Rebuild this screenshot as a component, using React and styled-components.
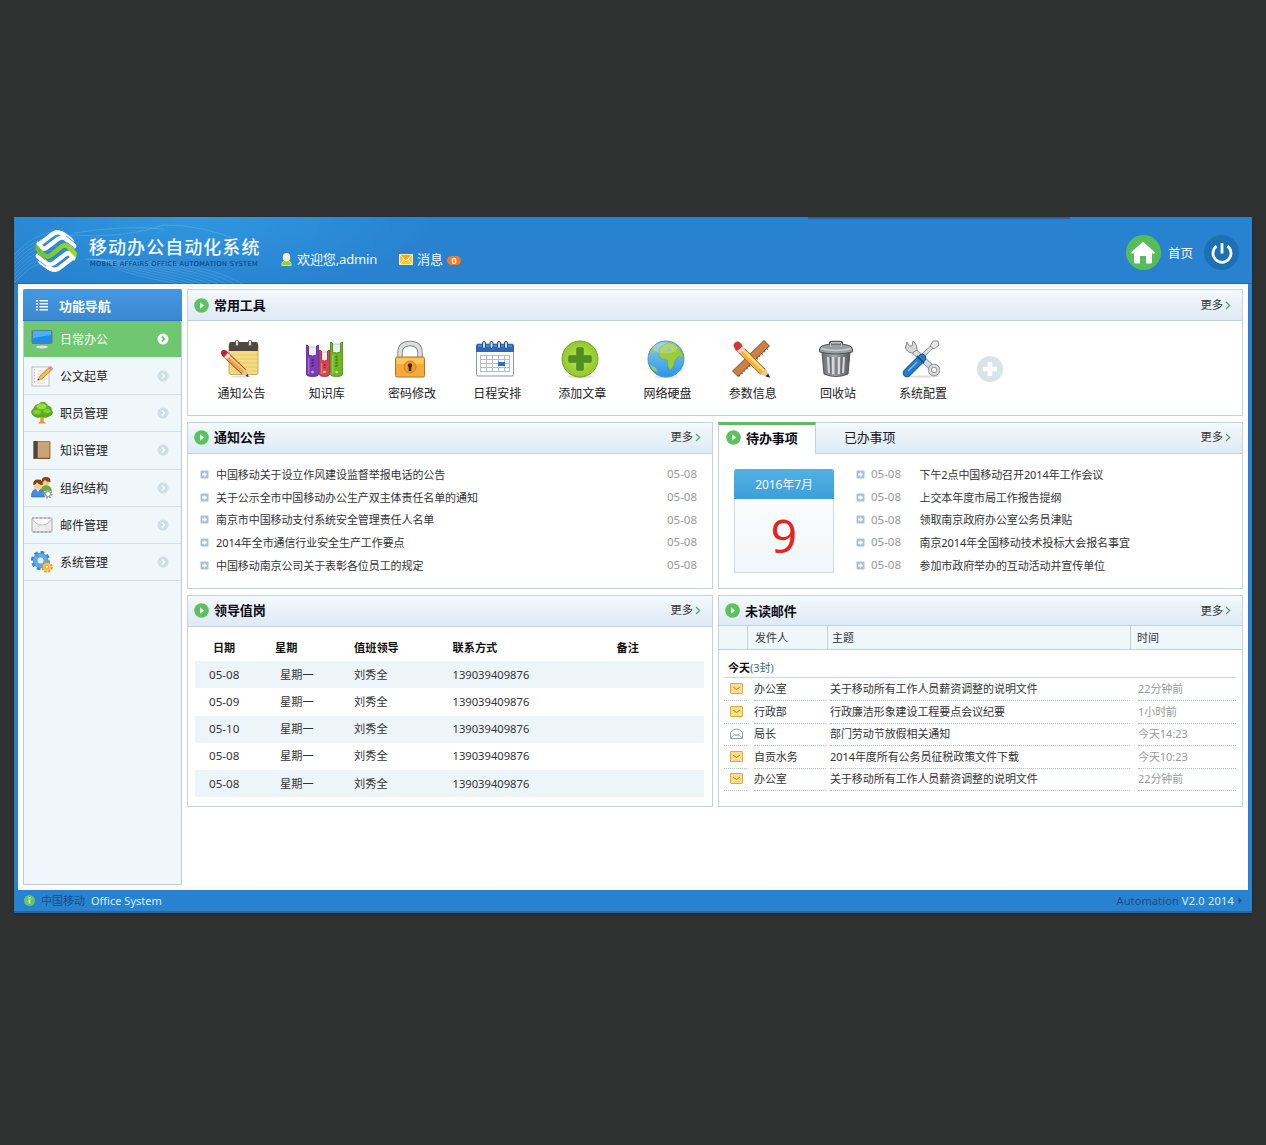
import React from "react";
import styled, { createGlobalStyle } from "styled-components";

const Global = createGlobalStyle`
  * { box-sizing: border-box; }
  body {
    margin: 0;
    background: #303231;
    color: #333;
    font-family: "Noto Sans", "Noto Sans CJK SC", sans-serif;
    font-size: 11px;
    line-height: 20px;
    white-space: nowrap;
  }
  svg { display: block; flex: none; }
`;

const Page = styled.div`
  min-height: 1145px;
  padding: 217px 14px 0;
`;

const Frame = styled.div`
  width: 1238px;
  height: 696px;
  display: flex;
  flex-direction: column;
  background: #2882d0;
  border-bottom: 2px solid #1f68a8;
  box-shadow: 0 1px 3px rgba(0, 0, 0, 0.35);
`;

const Header = styled.header`
  height: 67px;
  display: flex;
  position: relative;
  border-bottom: 1px solid #1e6cb2;
  background: radial-gradient(ellipse 240px 75px at 180px 0, #3097df, rgba(40, 130, 208, 0)), #2882d0;
`;

const HeaderWaves = styled.svg`
  position: absolute;
  left: 0;
  top: 0;
`;

const HeaderShade = styled.div`
  position: absolute;
  left: 794px;
  top: 0;
  width: 262px;
  height: 3px;
  background: linear-gradient(#25588a, rgba(40, 130, 208, 0));
`;

const Brand = styled.div`
  display: flex;
  position: relative;
  padding: 13px 0 0 21px;
  width: 267px;
`;

const BrandText = styled.div`
  padding: 7px 0 0 12px;
`;

const BrandName = styled.div`
  color: #f2faff;
  font-size: 18px;
  font-weight: 500;
  letter-spacing: 1.05px;
  line-height: 20px;
`;

const BrandSub = styled.div`
  margin-top: 3px;
  color: #0d3c6c;
  font-family: "DejaVu Sans", sans-serif;
  font-size: 6.6px;
  line-height: 9px;
  letter-spacing: 0.35px;
  padding-left: 1px;
`;

const HeaderItem = styled.div`
  display: flex;
  position: relative;
  align-items: center;
  height: 20px;
  margin-top: 32px;
  color: #f3faff;
  font-size: 13px;
  gap: ${(p) => p.$gap}px;
  width: ${(p) => p.$w}px;
`;

const Tight = styled.span`
  letter-spacing: ${(p) => p.$ls}px;
`;

const Badge = styled.span`
  width: 14px;
  height: 9px;
  border-radius: 5px;
  background: #ee7a2b;
  color: #fff;
  font-size: 9px;
  font-weight: 600;
  line-height: 9px;
  text-align: center;
  margin-top: 3px;
`;

const HeaderRight = styled.div`
  display: flex;
  margin-left: auto;
  padding: 18px 13px 0 0;
  align-items: flex-start;
`;

const Round = styled.div`
  width: 35px;
  height: 35px;
  border-radius: 50%;
  display: flex;
  align-items: center;
  justify-content: center;
  background: ${(p) => p.$bg};
`;

const HomeLabel = styled.span`
  color: #f3faff;
  font-size: 12.5px;
  padding: 9px 11px 0 7px;
`;

const Body = styled.div`
  height: 606px;
  margin: 0 4px;
  padding: 5px;
  display: flex;
  gap: 5px;
  background: linear-gradient(#f1f4f5, #fff 6px, #fff 601px, #f8f4f0);
`;

const Sidebar = styled.nav`
  width: 159px;
  height: 596px;
  background: #f0f7fb;
  border: 1px solid #b7ced6;
  border-top: 0;
  border-radius: 2px 2px 0 0;
`;

const SideHead = styled.div`
  margin: 0 -1px;
  height: 32px;
  padding-left: 13px;
  display: flex;
  align-items: center;
  gap: 11px;
  border-radius: 2px 2px 0 0;
  background: linear-gradient(#4598df, #3a88d2);
  border-bottom: 1px solid #2f78bd;
  color: #fff;
  font-size: 13px;
  font-weight: 700;
  letter-spacing: -0.1px;
  & > * { margin-top: 2px; }
`;

const SideItem = styled.div`
  height: ${(p) => (p.$active ? 37 : 37.2)}px;
  padding: 0 12px 0 7px;
  display: flex;
  align-items: center;
  color: ${(p) => (p.$active ? "#fff" : "#222")};
  background: ${(p) => (p.$active ? "#6fc871" : "transparent")};
  border-bottom: 1px solid ${(p) => (p.$active ? "#e6f3ee" : "#d3e0e6")};
  font-size: 12px;
  & > span { margin-left: 7px; margin-right: auto; padding-top: 2px; }
`;

const Main = styled.main`
  flex: 1;
  display: flex;
  flex-direction: column;
  gap: 6px;
`;

const Row = styled.div`
  display: grid;
  grid-template-columns: 526px 525px;
  gap: 5px;
`;

const Panel = styled.section`
  height: ${(p) => p.$h}px;
  border: 1px solid #c5d4db;
  background: #fff;
`;

const PanelHead = styled.div`
  height: ${(p) => (p.$low ? 30 : 31)}px;
  display: flex;
  align-items: center;
  padding: 0 11px ${(p) => (p.$raise ? 2 : 0)}px ${(p) => (p.$tabbed ? 0 : 6)}px;
  background: linear-gradient(#f4f9fc, #deeaf5);
  border-bottom: 1px solid #c0d3dc;
`;

const Title = styled.h2`
  margin: 0 auto 0 5px;
  color: #0c0c14;
  font-size: 13px;
  font-weight: 700;
  line-height: 20px;
  letter-spacing: -0.1px;
`;

const More = styled.a`
  display: flex;
  align-items: center;
  gap: 2px;
  margin-left: auto;
  color: #333;
  font-size: 11.3px;
`;

const ActiveTab = styled.div`
  width: 98px;
  height: 32px;
  margin: -1px 0 0 -1px;
  padding: 0 0 4px 7px;
  display: flex;
  align-items: center;
  align-self: flex-start;
  border-top: 3px solid #63b866;
  border-right: 1px solid #c0d3dc;
  border-left: 1px solid #c5d4db;
  background: #fff;
`;

const Tab = styled.div`
  margin-left: 28px;
  color: #16161c;
  font-size: 13px;
  letter-spacing: -0.2px;
`;

const Tools = styled.div`
  display: flex;
  padding: 19px 0 0 11px;
`;

const Tool = styled.div`
  width: 85.2px;
  display: flex;
  flex-direction: column;
  align-items: center;
  color: #222;
  font-size: 12px;
  line-height: 20px;
  & > svg { margin-right: 4px; }
  & > span { margin-top: 6px; }
`;

const AddTool = styled.div`
  width: 26px;
  height: 26px;
  margin: 16px 0 0 11px;
`;

const List = styled.div`
  flex: 1;
  padding: ${(p) => p.$pad};
`;

const ListRow = styled.div`
  height: 22.7px;
  display: flex;
  align-items: center;
  color: #333;
`;

const ListText = styled.span`
  margin-left: ${(p) => p.$left}px;
  margin-right: auto;
  padding-top: 1px;
  letter-spacing: -0.09px;
`;

const DateText = styled.span`
  color: #999;
  font-size: 11.5px;
  margin-left: ${(p) => p.$left || 0}px;
`;

const Agenda = styled.div`
  display: flex;
`;

const Calendar = styled.div`
  width: 100px;
  height: 104px;
  margin: 15px 0 0 15px;
  border: 1px solid #cddbe4;
  border-radius: 3px 3px 0 0;
  background: linear-gradient(#fff, #f0f6fa);
  text-align: center;
`;

const CalendarMonth = styled.div`
  height: 30px;
  margin: -1px -1px 0;
  border-radius: 3px 3px 0 0;
  background: linear-gradient(#52b0e6, #3d9fda);
  color: #f3faff;
  font-size: 12px;
  line-height: 31px;
  letter-spacing: -0.1px;
`;

const CalendarDay = styled.div`
  color: #e8231c;
  font-size: 46px;
  line-height: 73px;
`;

const Roster = styled.div`
  padding: 7px 8px 0 7px;
`;

const RosterRow = styled.div`
  height: 27.2px;
  display: grid;
  grid-template-columns: 80px 79px 98.5px 164px 1fr;
  align-items: center;
  background: ${(p) => (p.$shade ? "#edf5f9" : "transparent")};
  color: ${(p) => (p.$head ? "#111" : "#333")};
  font-weight: ${(p) => (p.$head ? 700 : 400)};
  font-size: 11.2px;
  & > :first-child { padding-left: ${(p) => (p.$head ? 18 : 14)}px; font-size: ${(p) => (p.$head ? 11.1 : 11.6)}px; }
  & > :nth-child(2) { padding-left: ${(p) => (p.$head ? 0 : 5)}px; }
`;

const MailHead = styled.div`
  height: 24px;
  display: grid;
  grid-template-columns: 28px 80px 303px 1fr;
  line-height: 24px;
  background: #f0f7fb;
  border-bottom: 1px solid #c0d3dc;
  & > span { border-left: 1px solid #c0d3dc; padding-left: 7px; }
  & > span:first-child { border-left: 0; }
  & > span:nth-child(3) { padding-left: 4px; }
  & > span:nth-child(4) { padding-left: 6px; }
`;

const MailGroup = styled.div`
  height: 28px;
  margin: 0 6px 0 5px;
  padding: 8px 0 0 4px;
  border-bottom: 1px solid #cad4da;
  color: #3f6d8e;
  & > b { color: #111; }
`;

const MailRow = styled.div`
  height: 22.6px;
  margin: 0 6px 0 5px;
  display: grid;
  grid-template-columns: 23px 73px 300px 1fr;
  & > * {
    border-bottom: 1px dotted #b4c0c8;
    line-height: 22px;
    letter-spacing: -0.07px;
  }
  & > :nth-child(1) { padding: 5px 0 0 6px; }
  & > :nth-child(2) { margin-left: 7px; margin-right: -6px; }
  & > :nth-child(3) { margin-left: 10px; margin-right: -10px; }
  & > :nth-child(4) { margin-left: 18px; color: #999; }
`;

const Footer = styled.footer`
  flex: 1;
  display: flex;
  align-items: center;
  padding: 0 9px 0 10px;
  color: #1c568c;
  font-size: 11px;
`;

const FooterText = styled.span`
  color: ${(p) => (p.$light ? "#d5f0ff" : "#174f85")};
  margin-left: ${(p) => (p.$push ? "auto" : `${p.$left}px`)};
  letter-spacing: ${(p) => p.$ls || 0}px;
`;

const upperBands = [
  "M4 15L7.500 18.300Q9 19.500 11 18L23 9Q27 6 31 9L41 17.500",
  "M1 13.500L3.500 14Q5 14 7 12.300L17 4.500Q22 .5 27 3.500L39 12",
];

const Logo = () => (
  <svg width="42" height="42" viewBox="0 0 42 42" fill="none">
    <defs>
      <clipPath id="disc"><circle cx="21" cy="21" r="21" /></clipPath>
      <linearGradient id="leaf"><stop offset="0" stopColor="#6cbd20" /><stop offset="1" stopColor="#a5dc22" /></linearGradient>
    </defs>
    <g clipPath="url(#disc)">
      {[0, 180].map((turn) => (
        <g key={turn} transform={`rotate(${turn} 21 21)`}>
          {upperBands.map((d) => <path key={d} d={d} stroke="#fff" strokeWidth="4.600" />)}
          <path d="M31 6L43 15M32 12.500L43 21" stroke="#2b88d4" strokeWidth=".8" />
        </g>
      ))}
      <path d="M-1 15L8 24.500Q11.500 28 15.500 25.500L26.500 16.500Q30.500 14 34 17.500L43 27" stroke="url(#leaf)" strokeWidth="4.600" />
    </g>
  </svg>
);

const Waves = () => (
  <HeaderWaves width="280" height="67" fill="none">
    {Array.from({ length: 8 }, (_, i) => (
      <path key={`a${i}`} d={`M0 ${38 + i * 4}C${10 + i} ${28 + i * 3} 22 ${16 + i * 4} ${46 - i} ${14 + i * 5}`} stroke="#8ad0f8" strokeWidth=".6" opacity=".4" />
    ))}
    {Array.from({ length: 9 }, (_, i) => (
      <path key={`b${i}`} d={`M${70 + i * 3} 42C${110 - i * 2} ${44 + i} ${190 - i * 9} ${42 + i * 2} ${228 - i * 8} 67`} stroke="#8ad0f8" strokeWidth=".6" opacity=".4" />
    ))}
    <path d="M55 18Q110 22 150 8Q190 8 225 24M60 16Q110 8 150 12" stroke="#8ad0f8" strokeWidth=".7" opacity=".4" />
  </HeaderWaves>
);

const Play = () => (
  <svg width="15" height="15" viewBox="0 0 15 15">
    <circle cx="7.5" cy="7.5" r="7.3" fill="#5cc25f" /><path d="M6 4.300L10 7.500L6 10.700Z" fill="#fff" />
  </svg>
);

const Chevron = () => (
  <svg width="6" height="9" viewBox="0 0 6 9" fill="none"><path d="M1 1l3.600 3.500L1 8" stroke="#4cab58" strokeWidth="1.3" /></svg>
);

const Bullet = () => (
  <svg width="9" height="9" viewBox="0 0 9 9">
    <rect x=".5" y=".5" width="8" height="8" rx="1" fill="#a8c3d9" />
    <path d="M2 3.500h2.200V2L7 4.500L4.200 7V5.500H2Z" fill="#fff" />
  </svg>
);

const Arrow = ({ active }) => (
  <svg width="12" height="12" viewBox="0 0 12 12" fill="none">
    <circle cx="6" cy="6" r="5.500" fill={active ? "#fff" : "#d0dfe7"} />
    <path d="M4.800 3.400L7.300 6L4.800 8.600" stroke={active ? "#59b45d" : "#fff"} strokeWidth="1.500" />
  </svg>
);

const Envelope = ({ open }) => open ? (
  <svg width="13" height="11" viewBox="0 0 13 11" fill="none" stroke="#98a0a8">
    <path d="M.5 4.500Q6.500-2.500 12.500 4.500V10.500H.5Z" fill="#fafafa" /><path d="M1 10L4 7H9L12 10M3 5.500Q6.500 9 10 5.500" strokeWidth=".8" />
  </svg>
) : (
  <svg width="13" height="11" viewBox="0 0 13 11" fill="none">
    <rect x=".5" y=".5" width="12" height="10" rx=".5" fill="#fbdf88" stroke="#e0a93a" />
    <path d="M3 4L6.500 6.500L10 4" stroke="#c07d20" /><path d="M1.500 9.500L4 7M11.500 9.500L9 7" stroke="#fff8d8" />
  </svg>
);

const HeaderMail = () => (
  <svg width="14" height="11" viewBox="0 0 14 11">
    <rect x=".5" y=".5" width="13" height="10" fill="#f8c53a" stroke="#fbe9a0" /><path d="M1 1L7 7L13 1M1 10L5 5M13 10L9 5" fill="none" stroke="#fff4cf" />
    <path d="M2 1L7 5.500L12 1" fill="#f0aa22" />
  </svg>
);

const UserIcon = () => (
  <svg width="11" height="13" viewBox="0 0 11 13">
    <path d="M.8 12.500Q.5 7.500 5.500 7.500T10.200 12.500Z" fill="#8bd620" stroke="#e8f7c8" strokeWidth=".7" />
    <ellipse cx="5.500" cy="4.200" rx="3.400" ry="3.900" fill="#fdf0c4" stroke="#fff" strokeWidth=".6" />
  </svg>
);

const HomeIcon = () => (
  <svg width="24" height="22" viewBox="0 0 24 22"><path d="M12 0Q12.500 0 13 .5L23.500 10Q24 11.500 22.500 11.500H21V20.500Q21 21.500 20 21.500H15V14H9V21.500H4Q3 21.500 3 20.500V11.500H1.500Q0 11.500 .5 10L11 .5Q11.500 0 12 0Z" fill="#fff" /></svg>
);

const PowerIcon = () => (
  <svg width="22" height="22" viewBox="0 0 22 22" fill="none" stroke="#fff" strokeWidth="2.800"><path d="M11 1V11.500" /><path d="M5.500 4.200A9 9 0 1 0 16.500 4.200" /></svg>
);

const ListIcon = () => (
  <svg width="12" height="11" viewBox="0 0 12 11" fill="#fff">
    {[0, 3, 6, 9].map((y) => <g key={y}><rect y={y} width="2" height="1.500" /><rect x="3.500" y={y} width="8.500" height="1.500" /></g>)}
  </svg>
);

const sideIcons = {
  monitor: <>
    <rect x=".5" y="2" width="21" height="14" rx="1.500" fill="#5f7d91" /><rect x="2" y="3" width="18" height="11.500" fill="#1d8cec" /><path d="M2 3H20V7L2 10Z" fill="#49b1fa" />
    <path d="M8.500 16H13.500V18H8.500Z" fill="#8b9aa2" /><ellipse cx="11" cy="19" rx="6" ry="1.500" fill="#dfe7ea" />
  </>,
  draft: <>
    <rect x="1" y="2" width="17" height="19" fill="#fcfcfd" stroke="#b7bcc4" /><path d="M6 6H15M6 9H12M6 12H14M6 15H14M6 18H14" stroke="#d5d9df" /><path d="M3.500 4V19" stroke="#b4bbc5" strokeDasharray="1.500 1.500" />
    <path d="M19 4L9.500 13" stroke="#c57a14" strokeWidth="4" /><path d="M19 4L9.500 13" stroke="#fbc144" strokeWidth="2.500" /><path d="M18.500 4.500L21 2.200" stroke="#dc87b4" strokeWidth="4" /><path d="M11 14.500L8 11L6.500 15.500Z" fill="#d7ab75" /><path d="M6.500 15.500L7 13.500L8.500 15Z" fill="#333" />
  </>,
  tree: <>
    <path d="M9 12H13L12.500 19L15 21.500H7L9.500 19Z" fill="#e59a2a" />
    <path d="M3 14C-1 11 .5 7.500 3 7C3 3 7 2.500 8 2C11-1.500 16 .5 16.500 4C20 4 21 7 20 8C22.500 10 21.500 13.500 18 14C15 16.500 12 15 11 14C8 16 5 15.500 3 14Z" fill="#5cb01c" stroke="#459413" strokeWidth=".7" />
    <ellipse cx="10.500" cy="4.500" rx="5" ry="3" fill="#9bdc40" /><ellipse cx="6" cy="10" rx="4" ry="2.200" fill="#86cf33" /><ellipse cx="16" cy="9" rx="3.500" ry="2" fill="#86cf33" />
  </>,
  book: <>
    <rect x="2.500" y="2" width="17" height="18" rx="1" fill="#a97c4e" /><rect x="2.500" y="2" width="4" height="18" fill="#4b4440" /><rect x="7" y="3" width="11" height="15.500" fill="#c9a477" /><path d="M3 19.500H19" stroke="#7c5733" />
  </>,
  people: <>
    <path d="M10 14Q10 8 15 8T21 14Z" fill="#6fae2b" /><circle cx="15" cy="4.500" r="3.800" fill="#f3c68e" /><path d="M11 5Q10 0 15 0T19.500 5Q15 5 14 2.500Q13 5 11 5Z" fill="#7d4816" />
    <path d="M.5 20Q0 12 7 12T13.500 20Z" fill="#3f8ee1" stroke="#246bb6" strokeWidth=".6" /><path d="M5 12L7 15L9 12Z" fill="#fff" /><circle cx="7" cy="8" r="4.500" fill="#f6cd9a" /><path d="M2.300 8Q1.500 2.500 7 2.500T11.800 8Q7 7.500 6 5Q5 8 2.300 8Z" fill="#784414" />
    <circle cx="17" cy="17" r="3.500" fill="#e0e0e0" stroke="#999" strokeWidth="2" strokeDasharray="1.700 1" /><circle cx="17" cy="17" r="2.500" fill="#fff" stroke="#999" />
  </>,
  mail: <>
    <rect x="1" y="4" width="20" height="14" rx="1" fill="#eeeeed" stroke="#a9abab" /><path d="M2 17.500L8.500 11M20 17.500L13.500 11" stroke="#dcdcdb" fill="none" /><path d="M1.500 5Q5 11 11 11T20.500 5" fill="#fbfbfb" stroke="#b9b9b9" /><path d="M2 18H20" stroke="#888" strokeDasharray="2 2" /><path d="M1 4H21" stroke="#999" strokeDasharray="2 2" />
  </>,
  gears: <>
    <circle cx="9.500" cy="9.500" r="7.800" fill="#4797dc" stroke="#3d86c6" strokeWidth="3.600" strokeDasharray="3.500 2.600" /><circle cx="9.500" cy="9.500" r="7.300" fill="#5da8e7" /><circle cx="9.500" cy="9.500" r="3" fill="#e4f1fa" />
    <circle cx="16" cy="16" r="4.200" fill="#f4b13c" stroke="#df962c" strokeWidth="3" strokeDasharray="2.100 1.200" /><circle cx="16" cy="16" r="4" fill="#fbc455" /><circle cx="16" cy="16" r="1.700" fill="#fff" stroke="#c18128" strokeWidth=".5" />
  </>,
};

const toolIcons = {
  notepad: <>
    <ellipse cx="20" cy="36.500" rx="10" ry="1" fill="#ddd" />
    <rect x="8" y="4" width="29" height="30.500" rx="2" fill="#f5dc84" stroke="#b99a48" strokeWidth=".8" />
    <path d="M9 15H36M9 19H36M9 23H36M9 27H36M9 31H36" stroke="#e2c265" strokeWidth=".8" />
    <path d="M8 11V5Q8 2 10 2H35Q37 2 37 5V11Z" fill="#4f4842" /><rect x="14.500" y="0" width="3" height="6" rx="1.500" fill="#ddd" stroke="#555" /><rect x="27.500" y="0" width="3" height="6" rx="1.500" fill="#ddd" stroke="#555" />
    <path d="M3 13L23 32" stroke="#9b5a20" strokeWidth="6.600" /><path d="M5 15L23 32" stroke="#f2a455" strokeWidth="5" /><path d="M6 14L24 31" stroke="#ffd293" strokeWidth="1.500" />
    <path d="M3 13L4 14" stroke="#cf202b" strokeWidth="6.200" strokeLinecap="round" /><path d="M5 15L7.500 17.300" stroke="#e9e9e9" strokeWidth="5.600" /><path d="M20.500 34L25.500 29L27.500 37Z" fill="#e7c290" /><path d="M24.500 36L26.800 33.800L27.500 37Z" fill="#333" />
  </>,
  books: <>
    {[[0.5, 12, 5, "#7d3db8", "#54208c"], [13.500, 10, 10, "#d2484e", "#9c2630"], [24.500, 12, 2, "#6cb81e", "#43870c"]].map(([x, w, y, c, d]) => <g key={x}>
      <path d={`M${x + 2} ${y + 2}H${x + w - 2}V${y + 12}H${x + 2}Z`} fill="#eceef0" stroke="#a9acb0" strokeWidth=".6" />
      <path d={`M${x} ${y}L${x + 2} ${y + 1}V${y + 10}Q${x + w / 2} ${y + 12} ${x + w - 2} ${y + 10}V${y + 1}L${x + w} ${y}V34Q${x + w} 36.500 ${x + w / 2} 36.500T${x} 34Z`} fill={c} stroke={d} strokeWidth=".8" />
      <path d={`M${x + w / 2} ${y + 14}V28`} stroke={d} strokeWidth="2" strokeDasharray="2 1" /><circle cx={x + w / 2} cy="32" r="1.300" fill="#fff" opacity=".6" /><path d={`M${x + 2.300} ${y + 13}V34`} stroke="#fff" opacity=".4" />
    </g>)}
  </>,
  lock: <>
    <path d="M9 18V13Q9 3.500 19 3.500T29 13V18" fill="none" stroke="#888" strokeWidth="5.500" /><path d="M9 18V13Q9 3.500 19 3.500T29 13V18" fill="none" stroke="#dcdddf" strokeWidth="3.600" />
    <rect x="4.500" y="17" width="29" height="20" rx="1.500" fill="#f3ac3e" stroke="#b77522" /><path d="M5.500 18H32.500V24H5.500Z" fill="#fbc85f" /><circle cx="19" cy="27" r="6" fill="#f29b2b" stroke="#d97c16" /><circle cx="19" cy="25.500" r="2.200" fill="#43230c" /><path d="M18 26H20L20.500 31H17.500Z" fill="#43230c" />
  </>,
  calendar: <>
    <rect x=".5" y="4" width="37" height="32" rx="1.500" fill="#fafbfc" stroke="#91959c" /><path d="M0 12V6Q0 4 2 4H36Q38 4 38 6V12Z" fill="#2e68b8" /><path d="M2 6H36" stroke="#709edb" />
    {[8, 15.500, 23, 30].map((x) => <rect key={x} x={x - 1.500} y="1.500" width="3" height="7" rx="1.500" fill="#d5dfef" stroke="#244d8c" />)}
    <path d="M4 15.500H34M4 19.500H34M4 23.500H34M4 27.500H34M4 31.500H34M4.500 15V32M10.500 15V32M16.500 15V32M22.500 15V32M28.500 15V32M33.500 15V32" stroke="#b9bcc2" strokeWidth="1" /><rect x="22" y="22" width="7" height="4" fill="#2670ce" />
  </>,
  plus: <>
    <ellipse cx="19" cy="36.500" rx="13" ry="1.500" fill="#ddd" /><circle cx="19" cy="19" r="18" fill="url(#lime)" stroke="#6ea526" />
    <path d="M17 7.500H21Q22.500 7.500 22.500 9V15.500H29Q30.500 15.500 30.500 17V21Q30.500 22.500 29 22.500H22.500V29Q22.500 30.500 21 30.500H17Q15.500 30.500 15.500 29V22.500H9Q7.500 22.500 7.500 21V17Q7.500 15.500 9 15.500H15.500V9Q15.500 7.500 17 7.500Z" fill="#4c8f26" stroke="#609f1b" strokeWidth="1" />
  </>,
  globe: <>
    <ellipse cx="19" cy="37" rx="12" ry="1" fill="#ddd" /><circle cx="19" cy="19" r="18" fill="url(#sea)" stroke="#4c91cb" />
    <path d="M12 9L16 5L22 2.500L30 6L35 13L36.500 19L32 16L28 20L27 25L23.500 30L21 27L20.500 20L14 18.500L11 15L13 12Z" fill="#9ccb3c" stroke="#6fab32" strokeWidth=".6" />
    <path d="M4 12L8 6.500L11 6L9 10L5 14ZM3 25L8 27L11 32L6 30Z" fill="#aac94a" /><path d="M22 8L18 12L25 11Z" fill="#5dbce8" />
    <ellipse cx="18" cy="8" rx="12" ry="5.500" fill="#fff" opacity=".22" />
  </>,
  pencils: <>
    <path d="M3 34L35 3" stroke="#8d4c27" strokeWidth="8.500" /><path d="M3.500 33.500L34.500 3.500" stroke="#cb8048" strokeWidth="7" /><path d="M7 36L37 7" stroke="#8d4c27" strokeWidth="2" strokeDasharray="1 2.500" />
    <path d="M5 6L31 32" stroke="#a7621d" strokeWidth="7.600" /><path d="M7 8L31 32" stroke="#f9b23e" strokeWidth="6.200" /><path d="M8 7L32 31" stroke="#ffe18b" strokeWidth="2" /><path d="M5.500 5.500L6.500 6.500" stroke="#cf343a" strokeWidth="7.600" strokeLinecap="round" /><path d="M8 8.500L10.500 11" stroke="#d5d6da" strokeWidth="7.400" /><path d="M28.500 34.500L34 29L38 37.800Z" fill="#edc893" /><path d="M33.500 36.300L36.300 33.800L38 37.800Z" fill="#222" />
  </>,
  trash: <>
    <path d="M5 12L7 34Q19 39 31 34L33 12Z" fill="url(#steel)" stroke="#515457" /><path d="M11 17L12 33M16 17V34M22 17V34M27 17L26 33" stroke="#d6d8d9" strokeWidth="2" /><path d="M13.500 17L14 34M19 17V35M25 17L24 34" stroke="#606366" strokeWidth="1" />
    <path d="M13 6V3.500Q13 2 15 2H23Q25 2 25 3.500V6" fill="none" stroke="#54575a" strokeWidth="2.500" /><path d="M2.500 9Q3 4 19 4T35.500 9V12Q19 16 2.500 12Z" fill="#9a9ea1" stroke="#505356" /><path d="M4 8.500Q19 12.500 34 8.500" fill="none" stroke="#cacccd" strokeWidth="1.500" /><path d="M13.500 7V4Q13.500 2.500 15 2.500H23Q24.500 2.500 24.500 4V7" fill="none" stroke="#bfc2c4" strokeWidth="1" />
  </>,
  config: <>
    <ellipse cx="21" cy="36.500" rx="16" ry="1" fill="#ddd" /><path d="M10 9L29 27" stroke="#85898d" strokeWidth="6" /><path d="M10 9L30 28" stroke="#d9dbdd" strokeWidth="4.500" />
    <path d="M5 2L3.500 7Q4 12 10 13L15 10Q16 5 11 1L10 6L7 6Z" fill="#d5d8da" stroke="#85898d" /><circle cx="32" cy="30" r="4.200" fill="#fff" stroke="#85898d" strokeWidth="4" /><circle cx="32" cy="30" r="4.200" fill="none" stroke="#d9dbdd" strokeWidth="2.500" />
    <path d="M18 18L31 6" stroke="#85898d" strokeWidth="4" /><path d="M18 18L31 6" stroke="#dfe1e3" strokeWidth="2.500" /><path d="M28 6L31 1L36 1L37 5L32 9Z" fill="#e7e8e9" stroke="#85898d" /><path d="M5 33L20 18" stroke="#104b83" strokeWidth="8.500" strokeLinecap="round" /><path d="M5 33L20 18" stroke="#237dcc" strokeWidth="6.800" strokeLinecap="round" /><path d="M6 31L15 22" stroke="#74b9ee" strokeWidth="1.500" /><path d="M15 16L22 23" stroke="#104b83" strokeWidth="1.500" />
  </>,
};

const IconDefs = () => (
  <defs>
    <radialGradient id="lime"><stop offset="0" stopColor="#c0e44e" /><stop offset="1" stopColor="#93c82e" /></radialGradient>
    <linearGradient id="sea" x2="0" y2="1"><stop offset="0" stopColor="#8ccaf1" /><stop offset="1" stopColor="#2996e9" /></linearGradient>
    <linearGradient id="steel"><stop offset="0" stopColor="#686b6e" /><stop offset=".45" stopColor="#aaadb0" /><stop offset="1" stopColor="#55585b" /></linearGradient>
  </defs>
);

const nav = [
  ["monitor", "日常办公"], ["draft", "公文起草"], ["tree", "职员管理"], ["book", "知识管理"],
  ["people", "组织结构"], ["mail", "邮件管理"], ["gears", "系统管理"],
];
const tools = [
  ["notepad", "通知公告"], ["books", "知识库"], ["lock", "密码修改"], ["calendar", "日程安排"], ["plus", "添加文章"],
  ["globe", "网络硬盘"], ["pencils", "参数信息"], ["trash", "回收站"], ["config", "系统配置"],
];
const notices = [
  "中国移动关于设立作风建设监督举报电话的公告", "关于公示全市中国移动办公生产双主体责任名单的通知",
  "南京市中国移动支付系统安全管理责任人名单", "2014年全市通信行业安全生产工作要点", "中国移动南京公司关于表彰各位员工的规定",
];
const todos = [
  "下午2点中国移动召开2014年工作会议", "上交本年度市局工作报告提纲", "领取南京政府办公室公务员津贴",
  "南京2014年全国移动技术投标大会报名事宜", "参加市政府举办的互动活动并宣传单位",
];
const roster = ["05-08", "05-09", "05-10", "05-08", "05-08"];
const mails = [
  ["办公室", "关于移动所有工作人员薪资调整的说明文件", "22分钟前"],
  ["行政部", "行政廉洁形象建设工程要点会议纪要", "1小时前"],
  ["局长", "部门劳动节放假相关通知", "今天14:23", true],
  ["自贡水务", "2014年度所有公务员征税政策文件下载", "今天10:23"],
  ["办公室", "关于移动所有工作人员薪资调整的说明文件", "22分钟前"],
];

const MoreLink = () => <More>更多<Chevron /></More>;
const Heading = ({ children, raise, low }) => (
  <PanelHead $raise={raise} $low={low}><Play /><Title>{children}</Title><MoreLink /></PanelHead>
);

export default function App() {
  return (
    <Page>
      <Global />
      <Frame>
        <Header>
          <Waves />
          <HeaderShade />
          <Brand>
            <Logo />
            <BrandText>
              <BrandName>移动办公自动化系统</BrandName>
              <BrandSub>MOBILE AFFAIRS OFFICE AUTOMATION SYSTEM</BrandSub>
            </BrandText>
          </Brand>
          <HeaderItem $gap={5} $w={118}><UserIcon /><Tight $ls={-0.12}>欢迎您,admin</Tight></HeaderItem>
          <HeaderItem $gap={4} $w={70}><HeaderMail /><span>消息</span><Badge>0</Badge></HeaderItem>
          <HeaderRight>
            <Round $bg="#57bd5a"><HomeIcon /></Round>
            <HomeLabel>首页</HomeLabel>
            <Round $bg="#1c71b2"><PowerIcon /></Round>
          </HeaderRight>
        </Header>
        <Body>
          <Sidebar>
            <SideHead><ListIcon /><span>功能导航</span></SideHead>
            {nav.map(([icon, label], i) => (
              <SideItem key={label} $active={i === 0}>
                <svg width="22" height="22" viewBox="0 0 22 22">{sideIcons[icon]}</svg>
                <span>{label}</span>
                <Arrow active={i === 0} />
              </SideItem>
            ))}
          </Sidebar>
          <Main>
            <Panel $h={127}>
              <Heading>常用工具</Heading>
              <Tools>
                {tools.map(([icon, label]) => (
                  <Tool key={label}>
                    <svg width="38" height="38" viewBox="0 0 38 38"><IconDefs />{toolIcons[icon]}</svg>
                    <span>{label}</span>
                  </Tool>
                ))}
                <AddTool>
                  <svg width="26" height="26" viewBox="0 0 26 26"><circle cx="13" cy="13" r="13" fill="#dae3e8" /><path d="M13 6V20M6 13H20" stroke="#fff" strokeWidth="4.500" /></svg>
                </AddTool>
              </Tools>
            </Panel>
            <Row>
              <Panel $h={167}>
                <Heading raise>通知公告</Heading>
                <List $pad="9px 15px 0 12px">
                  {notices.map((t) => <ListRow key={t}><Bullet /><ListText $left={7}>{t}</ListText><DateText>05-08</DateText></ListRow>)}
                </List>
              </Panel>
              <Panel $h={167}>
                <PanelHead $tabbed $raise>
                  <ActiveTab><Play /><Title>待办事项</Title></ActiveTab>
                  <Tab>已办事项</Tab>
                  <MoreLink />
                </PanelHead>
                <Agenda>
                  <Calendar>
                    <CalendarMonth>2016年7月</CalendarMonth>
                    <CalendarDay>9</CalendarDay>
                  </Calendar>
                  <List $pad="9px 0 0 22px">
                    {todos.map((t) => <ListRow key={t}><Bullet /><DateText $left={6}>05-08</DateText><ListText $left={18.5}>{t}</ListText></ListRow>)}
                  </List>
                </Agenda>
              </Panel>
            </Row>
            <Row>
              <Panel $h={212}>
                <Heading raise>领导值岗</Heading>
                <Roster>
                  <RosterRow $head><span>日期</span><span>星期</span><span>值班领导</span><span>联系方式</span><span>备注</span></RosterRow>
                  {roster.map((d, i) => (
                    <RosterRow key={i} $shade={i % 2 === 0}><span>{d}</span><span>星期一</span><span>刘秀全</span><span>139039409876</span><span /></RosterRow>
                  ))}
                </Roster>
              </Panel>
              <Panel $h={212}>
                <Heading low>未读邮件</Heading>
                <MailHead><span /><span>发件人</span><span>主题</span><span>时间</span></MailHead>
                <MailGroup><b>今天</b>(3封)</MailGroup>
                {mails.map(([from, subject, time, open], i) => (
                  <MailRow key={i}><div><Envelope open={open} /></div><span>{from}</span><span>{subject}</span><span>{time}</span></MailRow>
                ))}
              </Panel>
            </Row>
          </Main>
        </Body>
        <Footer>
          <svg width="11" height="11" viewBox="0 0 11 11"><circle cx="5.500" cy="5.500" r="5.500" fill="#63c765" /><path d="M5.500 2V3.500M5.500 4.500V8.500" stroke="#fff" strokeWidth="1.500" /></svg>
          <FooterText $left={6}>中国移动</FooterText>
          <FooterText $light $left={6}>Office System</FooterText>
          <FooterText $push $ls={0.12}>Automation</FooterText>
          <FooterText $light $left={3} $ls={0.22}>V2.0 2014</FooterText>
          <svg width="9" height="7" viewBox="0 0 9 7"><path d="M4.500 0L8 3.500L4.500 7Z" fill="#1a5a96" /></svg>
        </Footer>
      </Frame>
    </Page>
  );
}
